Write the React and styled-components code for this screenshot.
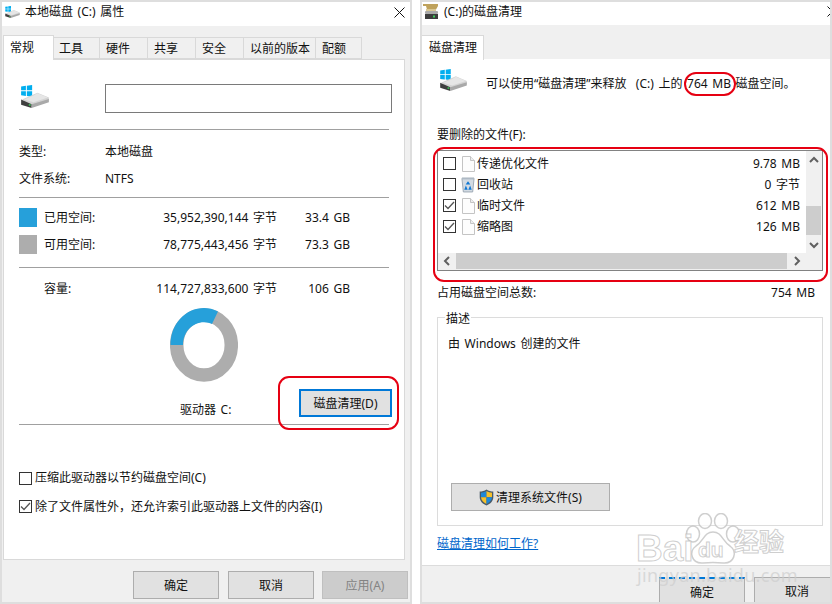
import React from "react";
import styled, { createGlobalStyle } from "styled-components";

const Global = createGlobalStyle`
  html, body { margin: 0; padding: 0; background: #fff; overflow: hidden; }
  * { box-sizing: border-box; }
  body { font-family: "Noto Sans", "Noto Sans CJK SC", sans-serif; font-size: 12px; color: #111; word-spacing: 1.5px; }
`;

const Desktop = styled.div`
  position: relative; width: 832px; height: 604px; display: flex; gap: 8px; overflow: hidden;
`;
const Window = styled.section`
  width: 412px; height: 604px; border: 2px solid #dedede; background: #f0f0f0;
  display: flex; flex-direction: column; overflow: hidden;
`;
const TitleBar = styled.header`
  height: ${p => p.$h}px; flex: none; background: #fff; display: flex; align-items: center;
  padding-left: ${p => p.$pad}px; gap: ${p => p.$gap}px; line-height: 18px; position: relative;
  padding-bottom: 4px;
`;
const CloseIcon = styled.svg`
  margin-left: auto; margin-right: ${p => p.$right}px; flex: none;
`;
const TabStrip = styled.nav`
  height: ${p => p.$h}px; flex: none; display: flex; align-items: flex-end; padding-left: ${p => p.$pad}px;
  position: relative; z-index: 1;
`;
const Tab = styled.div`
  width: ${p => p.$w}px; height: ${p => (p.$active ? 25 : 22)}px; flex: none;
  background: ${p => (p.$active ? "#fff" : "#f0f0f0")};
  border: 1px solid #d9d9d9; border-bottom: ${p => (p.$active ? "none" : "1px solid #d9d9d9")};
  border-left: ${p => (p.$first || p.$active ? "1px solid #d9d9d9" : "none")};
  margin-bottom: ${p => (p.$active ? -1 : 0)}px;
  padding: ${p => (p.$active ? 0 : 2)}px 0 0 ${p => p.$pad}px;
  display: flex; align-items: center; line-height: 18px; white-space: nowrap;
`;
const Panel = styled.main`
  flex: none; height: 501px; margin-left: 1px; width: 402px; background: #fff;
  border: 1px solid #d9d9d9; padding: 0 15px;
`;
const HeadRow = styled.div`
  margin-top: 24px; height: 29px; display: grid; grid-template-columns: 86px 287px; align-items: start;
`;
const HeadIcon = styled.div`
  padding: 1px 0 0 2px;
`;
const NameInput = styled.div`
  height: 29px; border: 1px solid #7a7a7a; background: #fff;
`;
const Rule = styled.hr`
  margin: ${p => p.$top}px 0 0; border: none; height: 1px; background: #a0a0a0;
`;
const InfoRow = styled.div`
  margin-top: ${p => p.$top}px; height: 20px; padding-top: 1px; line-height: 20px; display: grid; grid-template-columns: 86px 1fr;
`;
const SpaceRow = styled.div`
  margin-top: ${p => p.$top}px; height: ${p => p.$h}px; line-height: ${p => p.$h}px; display: grid;
  padding-top: ${p => p.$drop || 0}px;
  grid-template-columns: 25px 70px 163px 73px; white-space: nowrap;
`;
const Swatch = styled.i`
  display: block; width: 18px; height: 19px; background: ${p => p.$color};
`;
const Right = styled.span`
  text-align: right;
`;
const DonutWrap = styled.div`
  margin-top: 10px; height: 74px; display: flex; justify-content: center;
`;
const DriveRow = styled.div`
  margin-top: 7px; height: 28px; display: flex; align-items: flex-end; padding-left: 161px;
`;
const DriveLabel = styled.span`
  line-height: 20px; margin-bottom: -3px; white-space: nowrap;
`;
const Button = styled.div`
  width: ${p => p.$w || 86}px; height: 28px; flex: none; display: flex; align-items: center; justify-content: center;
  gap: 2px; background: ${p => (p.$disabled ? "#cccccc" : "#e1e1e1")};
  color: ${p => (p.$disabled ? "#838383" : "#111")};
  border: ${p => (p.$focus ? "2px solid #0078d7" : p.$disabled ? "1px solid #bfbfbf" : "1px solid #adadad")};
  white-space: nowrap; line-height: 18px; padding-top: 1px;
`;
const CleanButton = styled(Button)`
  margin-left: auto; margin-right: -3px; align-self: flex-start;
`;
const OkButton = styled(Button)`
  margin-right: 1px;
`;
const CheckRow = styled.label`
  margin-top: ${p => p.$top}px; height: 16px; display: flex; align-items: center; gap: 3px;
  line-height: 16px; white-space: nowrap;
`;
const CheckText = styled.span`
  padding-bottom: ${p => p.$lift || 0}px;
  padding-top: ${p => p.$drop || 0}px;
`;
const Box = styled.span`
  width: 13px; height: 13px; border: 1px solid #333; background: #fff; flex: none;
  display: flex; align-items: center; justify-content: center;
`;
const LeftFooter = styled.footer`
  flex: 1; display: flex; justify-content: flex-end; gap: 8px; padding: 11px 2px 0 0;
`;

const CleanPanel = styled.main`
  flex: none; height: 507px; background: #fff; border-bottom: 1px solid #dcdcdc; padding: 0 7px 0 15px;
  position: relative;
`;
const ActiveTabRight = styled(Tab)`
  border-left: none;
`;
const Intro = styled.div`
  padding-top: 10px; height: 35px; display: flex; gap: 18px; padding-left: 2px; align-items: flex-start;
`;
const IntroText = styled.span`
  margin-top: 5px; line-height: 20px; white-space: pre;
`;
const FieldLabel = styled.div`
  margin-top: 29px; height: 20px; padding-top: 2px; line-height: 20px;
`;
const ListBox = styled.div`
  margin-top: 7px; height: 121px; border: 1px solid #828282; background: #f0f0f0;
  display: flex; flex-direction: column;
`;
const ListTop = styled.div`
  height: 102px; display: flex;
`;
const Items = styled.div`
  flex: 1; background: #fff; padding: 2px 6px 0 5px;
`;
const Item = styled.div`
  height: 21px; display: flex; align-items: center; line-height: 21px;
`;
const ItemIcon = styled.span`
  width: 14px; margin: 0 2px 0 5px; display: flex; justify-content: center; flex: none;
`;
const ItemSize = styled.span`
  margin-left: auto;
`;
const VScroll = styled.div`
  width: 16px; flex: none; display: flex; flex-direction: column; background: #f0f0f0;
`;
const Arrow = styled.div`
  height: 17px; flex: none; display: flex; align-items: center; justify-content: center;
`;
const VTrack = styled.div`
  flex: 1; padding-top: 38px;
`;
const VThumb = styled.div`
  width: 15px; height: 29px; background: #cdcdcd;
`;
const HScroll = styled.div`
  height: 16px; display: grid; grid-template-columns: 18px 331px 19px 1fr; align-items: stretch;
`;
const HArrow = styled.div`
  display: flex; align-items: center; justify-content: center;
`;
const HThumb = styled.div`
  background: #cdcdcd;
`;
const TotalRow = styled.div`
  margin-top: 10px; height: 20px; padding: 2px 8px 0 0; line-height: 20px; display: flex; justify-content: space-between;
`;
const Group = styled.fieldset`
  margin: 5px 0 0; padding: 0 0 0 10px; height: 220px; border: 1px solid #dcdcdc; min-width: 0;
`;
const Legend = styled.legend`
  margin-left: -3px; padding: 4px 1px 0; line-height: 18px; font-size: 12px;
`;
const GroupText = styled.div`
  margin-top: 6px; height: 20px; line-height: 20px;
`;
const SystemButton = styled(Button)`
  margin: 129px 0 0 3px;
`;
const HelpLink = styled.a`
  display: block; margin-top: 8px; line-height: 20px; color: #0066cc; text-decoration: underline;
`;
const FocusButton = styled(Button)`
  border-top: 2px dashed #0078d7; background: #e1e1e1; border-bottom: none;
`;
const RightFooter = styled.footer`
  flex: 1; display: flex; gap: 9px; padding: 11px 0 0 237px;
`;

const Callout = styled.div`
  position: absolute; left: ${p => p.$x}px; top: ${p => p.$y}px; width: ${p => p.$w}px; height: ${p => p.$h}px;
  border: 2px solid #e60012; border-radius: ${p => p.$r}px; pointer-events: none; z-index: 3;
`;
const Watermark = styled.div`
  position: absolute; left: 636px; top: 513px; width: 152px; height: 74px; z-index: 4; pointer-events: none;
`;
const Paw = styled.svg`
  position: absolute; left: 48px; top: 0;
`;
const WmText = styled.span`
  position: absolute; left: ${p => p.$x}px; top: ${p => p.$y}px; font: 700 ${p => p.$size}px/1 "Liberation Sans", "Noto Sans CJK SC", sans-serif;
  color: rgba(255,255,255,.75); -webkit-text-stroke: 1px rgba(190,190,190,.75); white-space: nowrap;
`;
const WmDomain = styled.span`
  position: absolute; left: 1px; top: 53px; font: 400 18px/18px "Noto Sans", sans-serif; letter-spacing: .3px;
  color: rgba(205,205,205,.7); white-space: nowrap;
`;

const Check = () => (
  <svg width="11" height="9" viewBox="0 0 11 9"><path d="M1 4.5 L4 7.5 L10 1" fill="none" stroke="#555" strokeWidth="1.3" /></svg>
);
const CheckBox = ({ on }) => <Box>{on && <Check />}</Box>;

const DriveIcon = ({ w = 28, h = 23 }) => (
  <svg width={w} height={h} viewBox="0 0 29 24">
    <path d="M0 1.5 L5 .8 V5.6 H0Z M6 .7 L11.5 0 V5.6 H6Z M0 6.6 H5 V11.4 L0 10.8Z M6 6.6 H11.5 V12.2 L6 11.5Z" fill="#00aeef" />
    <path d="M1 15 L17 8 L29 13 L29 16 L11 22 Z" fill="#d4d4d4" />
    <path d="M13 11 L17 8.5 L28 13 L13 18 L3 15Z" fill="#e6e6e6" />
    <path d="M0 15 L11 20 L11 24 L0 20.5Z" fill="#3f3f3f" />
    <path d="M11 20 L29 14.5 L29 18 L11 24Z" fill="#a9a9a9" />
    <rect x="8" y="20" width="2" height="1.6" fill="#3ecf5a" />
  </svg>
);
const BroomDrive = () => (
  <svg width="16" height="15" viewBox="0 0 16 15">
    <path d="M0 0 H15 V2 L13 5.5 H4 L3 2 H0Z" fill="#bfa25c" />
    <rect x="3" y="5" width="10" height="2" fill="#d9c894" />
    <rect x="2" y="7" width="13" height="3" rx="1" fill="#a9a9a9" />
    <rect x="2" y="10" width="13" height="5" fill="#3c3c3c" />
    <rect x="10" y="11.5" width="2" height="2" fill="#3ecf5a" />
  </svg>
);
const FileIcon = () => (
  <svg width="13" height="16" viewBox="0 0 13 16">
    <path d="M.5 .5 H8.5 L12.5 4.5 V15.5 H.5Z" fill="#fdfdfd" stroke="#c4c4c4" />
    <path d="M8.5 .5 V4.5 H12.5" fill="#eee" stroke="#c4c4c4" />
  </svg>
);
const BinIcon = () => (
  <svg width="15" height="17" viewBox="0 0 15 17">
    <path d="M1 2 H14 L12.5 16.500 H2.500Z" fill="#d3dbe3" stroke="#9aa6b2" />
    <rect x="1" y="1" width="13" height="2" fill="#aeb9c4" />
    <path d="M7.500 5 L10 8.500 H5Z M3.500 14 L5.200 9.500 L7.200 14Z M7.800 14 L9.800 9.500 L11.500 14Z" fill="#0f77d4" />
  </svg>
);
const Shield = () => (
  <svg width="15" height="17" viewBox="0 0 15 17">
    <path d="M7.5 .5 C5.5 2 3 2.6 .7 2.6 V8 C.7 12 3.5 15 7.5 16.5 C11.5 15 14.3 12 14.3 8 V2.6 C12 2.6 9.5 2 7.5 .5Z" fill="#4a5a68" />
    <path d="M7.5 2 C5.8 3 3.8 3.6 2 3.7 V8.3 H7.5Z" fill="#1e88d8" />
    <path d="M7.5 2 C9.2 3 11.2 3.6 13 3.7 V8.3 H7.5Z" fill="#f6c12b" />
    <path d="M2 8.3 H7.5 V15 C4.5 13.8 2.3 11.4 2 8.3Z" fill="#f6c12b" />
    <path d="M13 8.3 H7.5 V15 C10.5 13.8 12.7 11.4 13 8.3Z" fill="#1e88d8" />
  </svg>
);
const Chevron = ({ dir }) => {
  const d = { up: "M1 6 L5 2 L9 6", down: "M1 2 L5 6 L9 2", left: "M6 1 L2 5 L6 9", right: "M2 1 L6 5 L2 9" }[dir];
  const hor = dir === "left" || dir === "right";
  return (
    <svg width={hor ? 8 : 10} height={hor ? 10 : 8} viewBox={hor ? "0 0 8 10" : "0 0 10 8"}>
      <path d={d} fill="none" stroke="#606060" strokeWidth="2" />
    </svg>
  );
};
const Donut = () => (
  <svg width="68" height="74" viewBox="0 0 68 74">
    <ellipse cx="34" cy="37" rx="27.3" ry="30" fill="none" stroke="#adadad" strokeWidth="13.5" />
    <path d="M.5 37 C.5 16 15.5 0 34 0 C38.5 0 43.5 1 48 3.5 L42 16 C39.5 15 37 14.300 34 14.300 C22.500 14.300 13 24 13 37Z" fill="#26a0da" />
  </svg>
);

const items = [
  { name: "传递优化文件", size: "9.78 MB", icon: <FileIcon /> },
  { name: "回收站", size: "0 字节", icon: <BinIcon /> },
  { name: "临时文件", size: "612 MB", icon: <FileIcon />, on: true },
  { name: "缩略图", size: "126 MB", icon: <FileIcon />, on: true },
];
const tabs = [
  ["工具", 46, 5], ["硬件", 48, 6], ["共享", 48, 6], ["安全", 48, 6], ["以前的版本", 72, 6], ["配额", 46, 6],
];

export default function App() {
  return (
    <Desktop>
      <Global />
      <Window>
        <TitleBar $h={24} $pad={3} $gap={5}>
          <DriveIcon w={15} h={12} />
          <span>本地磁盘 (C:) 属性</span>
          <CloseIcon $right={5} width="11" height="11" viewBox="0 0 11 11"><path d="M.5 .5 L10.500 10.500 M10.500 .5 L.5 10.500" stroke="#111" strokeWidth="1" /></CloseIcon>
        </TitleBar>
        <TabStrip $h={33} $pad={1}>
          <Tab $w={51} $active $first $pad={6}>常规</Tab>
          {tabs.map(([t, w, pad]) => <Tab key={t} $w={w} $pad={pad}>{t}</Tab>)}
        </TabStrip>
        <Panel>
          <HeadRow>
            <HeadIcon><DriveIcon /></HeadIcon>
            <NameInput />
          </HeadRow>
          <Rule $top={16} />
          <InfoRow $top={11}><span>类型:</span><span>本地磁盘</span></InfoRow>
          <InfoRow $top={7}><span>文件系统:</span><span>NTFS</span></InfoRow>
          <Rule $top={9} />
          <SpaceRow $top={10} $h={19}><Swatch $color="#26a0da" /><span>已用空间:</span><Right>35,952,390,144 字节</Right><Right>33.4 GB</Right></SpaceRow>
          <SpaceRow $top={8} $h={19}><Swatch $color="#adadad" /><span>可用空间:</span><Right>78,775,443,456 字节</Right><Right>73.3 GB</Right></SpaceRow>
          <Rule $top={13} />
          <SpaceRow $top={10} $h={20} $drop={1}><i /><span>容量:</span><Right>114,727,833,600 字节</Right><Right>106 GB</Right></SpaceRow>
          <DonutWrap><Donut /></DonutWrap>
          <DriveRow>
            <DriveLabel>驱动器 C:</DriveLabel>
            <CleanButton $w={93} $focus>磁盘清理(D)</CleanButton>
          </DriveRow>
          <Rule $top={7} />
          <CheckRow $top={45}><CheckBox /><CheckText>压缩此驱动器以节约磁盘空间(C)</CheckText></CheckRow>
          <CheckRow $top={12}><CheckBox on /><CheckText $drop={1}>除了文件属性外，还允许索引此驱动器上文件的内容(I)</CheckText></CheckRow>
        </Panel>
        <LeftFooter>
          <OkButton>确定</OkButton>
          <Button>取消</Button>
          <Button $disabled>应用(A)</Button>
        </LeftFooter>
      </Window>

      <Window>
        <TitleBar $h={23} $pad={1} $gap={5}>
          <BroomDrive />
          <span>(C:)的磁盘清理</span>
          <CloseIcon $right={-8} width="11" height="11" viewBox="0 0 11 11"><path d="M.5 .5 L10.500 10.500 M10.500 .5 L.5 10.500" stroke="#111" strokeWidth="1" /></CloseIcon>
        </TitleBar>
        <TabStrip $h={34} $pad={0}>
          <ActiveTabRight $w={62} $active $pad={7}>磁盘清理</ActiveTabRight>
        </TabStrip>
        <CleanPanel>
          <Intro>
            <DriveIcon w={29} h={22} />
            <IntroText>可以使用“磁盘清理”来释放  (C:) 上的 764 MB 磁盘空间。</IntroText>
          </Intro>
          <FieldLabel>要删除的文件(F):</FieldLabel>
          <ListBox>
            <ListTop>
              <Items>
                {items.map(it => (
                  <Item key={it.name}>
                    <CheckBox on={it.on} />
                    <ItemIcon>{it.icon}</ItemIcon>
                    <span>{it.name}</span>
                    <ItemSize>{it.size}</ItemSize>
                  </Item>
                ))}
              </Items>
              <VScroll>
                <Arrow><Chevron dir="up" /></Arrow>
                <VTrack><VThumb /></VTrack>
                <Arrow><Chevron dir="down" /></Arrow>
              </VScroll>
            </ListTop>
            <HScroll>
              <HArrow><Chevron dir="left" /></HArrow>
              <HThumb />
              <HArrow><Chevron dir="right" /></HArrow>
            </HScroll>
          </ListBox>
          <TotalRow><span>占用磁盘空间总数:</span><span>754 MB</span></TotalRow>
          <Group>
            <Legend>描述</Legend>
            <GroupText>由 Windows 创建的文件</GroupText>
            <SystemButton $w={159}><Shield />清理系统文件(S)</SystemButton>
          </Group>
          <HelpLink href="#">磁盘清理如何工作?</HelpLink>
        </CleanPanel>
        <RightFooter>
          <FocusButton>确定</FocusButton>
          <Button>取消</Button>
        </RightFooter>
      </Window>

      <Callout $x={278} $y={376} $w={121} $h={54} $r={11} />
      <Callout $x={684} $y={72} $w={52} $h={24} $r={12} />
      <Callout $x={433} $y={147} $w={395} $h={135} $r={11} />

      <Watermark>
        <Paw width="58" height="54" viewBox="0 0 58 54">
          <g fill="rgba(255,255,255,.7)" stroke="rgba(195,195,195,.8)" strokeWidth="1.5">
            <ellipse cx="9" cy="21" rx="6.500" ry="8" />
            <ellipse cx="21" cy="8" rx="6.500" ry="7.500" />
            <ellipse cx="37" cy="8" rx="6.500" ry="7.500" />
            <ellipse cx="49" cy="21" rx="6.500" ry="8" />
            <path d="M29 19 C38 19 38 28 46 33 C54 39 50 51 39 50 C34 49.500 24 49.500 19 50 C8 51 4 39 12 33 C20 28 20 19 29 19Z" />
          </g>
        </Paw>
        <WmText $x={0} $y={17} $size={37}>Bai</WmText>
        <WmText $x={62} $y={26} $size={21}>du</WmText>
        <WmText $x={98} $y={17} $size={25}>经验</WmText>
        <WmDomain>jingyan.baidu.com</WmDomain>
      </Watermark>
    </Desktop>
  );
}
